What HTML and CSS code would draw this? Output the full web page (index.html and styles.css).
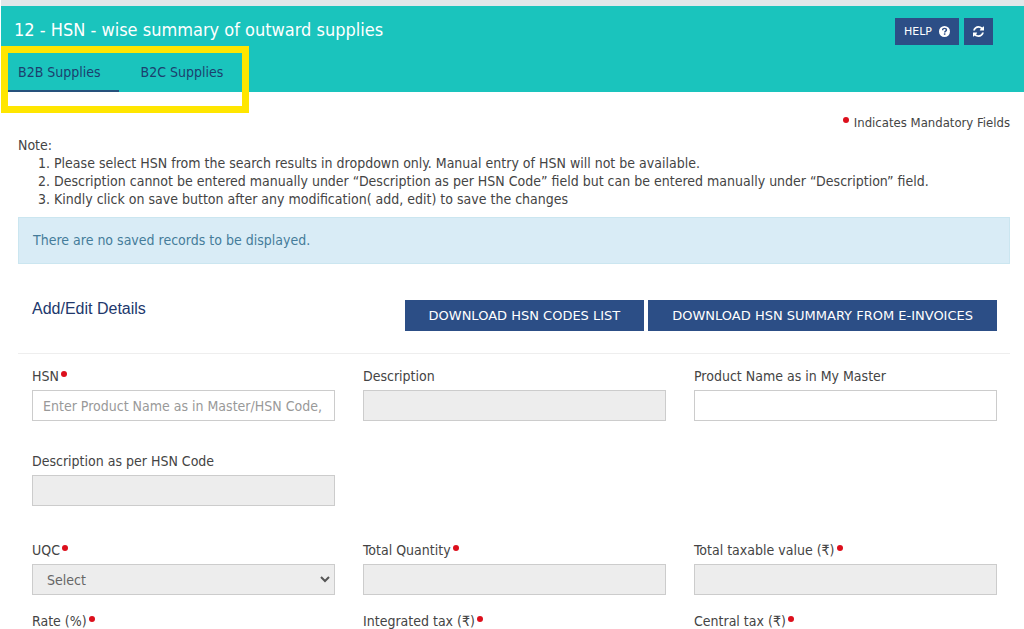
FILE: index.html
```html
<!DOCTYPE html>
<html lang="en">

<head>
    <meta charset="UTF-8">
    <meta name="viewport" content="width=device-width, initial-scale=1.0">
    <title>12 - HSN - wise summary of outward supplies</title>
    <link rel="stylesheet" href="styles.css">
</head>

<body>
    <header class="page-header">
        <div class="title-bar">
            <h1>12 - HSN - wise summary of outward supplies</h1>
            <div class="header-buttons">
                <button type="button" class="btn btn-small">HELP
                    <svg width="11" height="11" viewBox="0 0 12 12" aria-hidden="true">
                        <circle cx="6" cy="6" r="6" fill="#fff" />
                        <path d="M4 4.6C4 3.2 4.9 2.6 6 2.6S8.1 3.3 8.1 4.4C8.1 5.7 6.2 5.7 6.2 7.1" fill="none" stroke="#2c4e86" stroke-width="1.6" />
                        <rect x="5.3" y="8" width="1.7" height="1.6" fill="#2c4e86" />
                    </svg>
                </button>
                <button type="button" class="btn btn-small" aria-label="Refresh">
                    <svg width="11" height="11" viewBox="0 0 1536 1536" aria-hidden="true">
                        <path fill="#fff" d="M1511 928q0 5-1 7-64 268-268 434.500T764 1536q-146 0-282.500-55T238 1324l-129 129q-19 19-45 19t-45-19-19-45V960q0-26 19-45t45-19h448q26 0 45 19t19 45-19 45l-137 137q71 66 161 102t187 36q134 0 250-65t186-179q11-17 53-117 8-23 30-23h192q13 0 22.500 9.500t9.500 22.500zm25-800v448q0 26-19 45t-45 19h-448q-26 0-45-19t-19-45 19-45l138-138Q969 256 768 256q-134 0-250 65T332 500q-11 17-53 117-8 23-30 23H50q-13 0-22.500-9.500T18 608v-7q65-268 270-434.500T768 0q146 0 284 55.500T1297 212l130-129q19-19 45-19t45 19 19 45z" />
                    </svg>
                </button>
            </div>
        </div>
        <nav class="tabs">
            <a href="#b2b" class="tab active">B2B Supplies</a>
            <a href="#b2c" class="tab">B2C Supplies</a>
            <span class="highlight"></span>
        </nav>
    </header>

    <main class="content">
        <p class="mandatory"><span class="dot"></span>Indicates Mandatory Fields</p>

        <div class="note">
            <p>Note:</p>
            <ol>
                <li>Please select HSN from the search results in dropdown only. Manual entry of HSN will not be available.</li>
                <li>Description cannot be entered manually under “Description as per HSN Code” field but can be entered manually under “Description” field.</li>
                <li>Kindly click on save button after any modification( add, edit) to save the changes</li>
            </ol>
        </div>

        <div class="alert">There are no saved records to be displayed.</div>

        <div class="section-head">
            <h2>Add/Edit Details</h2>
            <div class="actions">
                <button type="button" class="btn">DOWNLOAD HSN CODES LIST</button>
                <button type="button" class="btn">DOWNLOAD HSN SUMMARY FROM E-INVOICES</button>
            </div>
        </div>

        <form class="details">
            <div class="row">
                <div class="field">
                    <label for="hsn">HSN<span class="dot"></span></label>
                    <input type="text" id="hsn" placeholder="Enter Product Name as in Master/HSN Code, ">
                </div>
                <div class="field">
                    <label for="desc">Description</label>
                    <input type="text" id="desc" disabled>
                </div>
                <div class="field">
                    <label for="product">Product Name as in My Master</label>
                    <input type="text" id="product">
                </div>
            </div>
            <div class="row">
                <div class="field">
                    <label for="hsnDesc">Description as per HSN Code</label>
                    <input type="text" id="hsnDesc" disabled>
                </div>
            </div>
            <div class="row tax-row">
                <div class="field">
                    <label for="uqc">UQC<span class="dot"></span></label>
                    <select id="uqc" disabled>
                        <option>Select</option>
                    </select>
                </div>
                <div class="field">
                    <label for="quantity">Total Quantity<span class="dot"></span></label>
                    <input type="text" id="quantity" disabled>
                </div>
                <div class="field">
                    <label for="taxable">Total taxable value (₹)<span class="dot"></span></label>
                    <input type="text" id="taxable" disabled>
                </div>
                <div class="field">
                    <label for="rate">Rate (%)<span class="dot"></span></label>
                    <select id="rate" disabled>
                        <option>Select</option>
                    </select>
                </div>
                <div class="field">
                    <label for="igst">Integrated tax (₹)<span class="dot"></span></label>
                    <input type="text" id="igst" disabled>
                </div>
                <div class="field">
                    <label for="cgst">Central tax (₹)<span class="dot"></span></label>
                    <input type="text" id="cgst" disabled>
                </div>
            </div>
        </form>
    </main>
</body>

</html>
```
FILE: styles.css
```css
* {
    box-sizing: border-box;
}

body {
    margin: 0;
    font-family: "DejaVu Sans Condensed", Tahoma, Verdana, sans-serif;
    font-size: 14px;
    line-height: 18px;
    color: #444;
    background: #fff;
}

h1,
h2,
p,
ol {
    margin: 0;
    font-weight: normal;
}

.page-header {
    height: 92px;
    margin-left: 1px;
    border-top: 6px solid #e1e7e9;
    background: #1ac4bd;
}

.title-bar {
    display: flex;
    justify-content: space-between;
    align-items: flex-start;
    padding: 12px 31px 0 13px;
}

h1 {
    font-size: 18px;
    line-height: 24px;
    color: #fff;
}

.header-buttons {
    display: flex;
    gap: 5px;
}

.btn {
    height: 31px;
    padding: 0 24px;
    border: none;
    font-family: "DejaVu Sans", Verdana, sans-serif;
    font-size: 13px;
    color: #fff;
    background: #2c4e86;
    cursor: pointer;
}

.btn-small {
    display: flex;
    align-items: center;
    gap: 7px;
    height: 27px;
    padding: 0 9px;
    font-size: 11px;
}

.tabs {
    position: relative;
    display: flex;
    gap: 12px;
    padding-left: 7px;
}

.tab {
    height: 47px;
    padding: 15px 18px 0 10px;
    line-height: 24px;
    color: #1c3f6e;
    text-decoration: none;
    border-bottom: 2px solid transparent;
}

.tab.active {
    border-color: #26517c;
}

/* yellow frame over the tabs */
.highlight {
    position: absolute;
    top: 1px;
    left: 0;
    width: 248px;
    height: 67px;
    border: 7px solid #ffe600;
    pointer-events: none;
}

.content {
    padding: 22px 14px 24px 18px;
}

.dot {
    display: inline-block;
    width: 6px;
    height: 6px;
    margin-left: 2px;
    border-radius: 50%;
    background: #dc0f1c;
    vertical-align: 4px;
}

.mandatory {
    font-size: 13px;
    text-align: right;
}

.mandatory .dot {
    margin-right: 5px;
}

.note {
    padding-top: 4px;
}

.note ol {
    padding-left: 36px;
}

.alert {
    margin-top: 9px;
    padding: 13px 14px;
    border: 1px solid #cbe6f0;
    line-height: 19px;
    color: #457c9a;
    background: #d9ecf6;
}

.section-head {
    display: flex;
    justify-content: space-between;
    align-items: flex-start;
    padding: 36px 13px 22px 14px;
    border-bottom: 1px solid #eee;
}

h2 {
    font-family: "Liberation Sans", Arial, sans-serif;
    font-size: 16px;
    color: #21386c;
}

.actions {
    display: flex;
    gap: 4px;
}

.details {
    display: flex;
    flex-direction: column;
    gap: 30px;
    padding: 12px 13px 0 14px;
}

.row {
    display: grid;
    grid-template-columns: repeat(3, 1fr);
    gap: 28px;
}

.tax-row {
    row-gap: 16px;
    padding-top: 4px;
}

.field label {
    display: block;
    margin-bottom: 4px;
    line-height: 20px;
}

.field input,
.field select {
    display: block;
    width: 100%;
    height: 31px;
    padding: 0 10px;
    border: 1px solid #ccc;
    border-radius: 0;
    font-family: inherit;
    font-size: 14px;
    color: #666;
    background-color: #fff;
}

.field input::placeholder {
    color: #999;
}

.field input:disabled,
.field select:disabled {
    background-color: #ededed;
    opacity: 1;
}

.field select {
    appearance: none;
    padding-left: 14px;
    background-image: url("data:image/svg+xml,%3Csvg xmlns='http://www.w3.org/2000/svg' width='10' height='7'%3E%3Cpath d='M1 1l4 4 4-4' fill='none' stroke='%23555' stroke-width='2'/%3E%3C/svg%3E");
    background-repeat: no-repeat;
    background-position: right 4px center;
}
```
